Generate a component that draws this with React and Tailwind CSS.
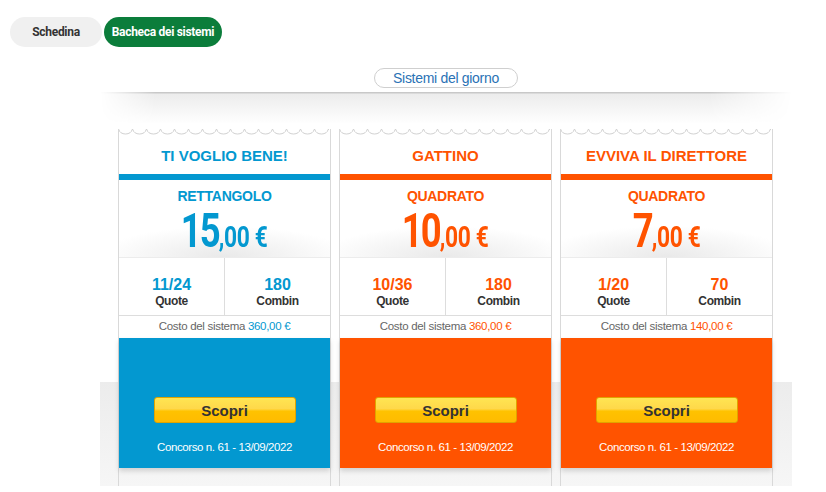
import React from "react";

const cards = [
  {
    title: "TI VOGLIO BENE!",
    kind: "RETTANGOLO",
    euro: "15",
    quote: "11/24",
    combin: "180",
    costo: "360,00 €",
    color: "blue",
  },
  {
    title: "GATTINO",
    kind: "QUADRATO",
    euro: "10",
    quote: "10/36",
    combin: "180",
    costo: "360,00 €",
    color: "orange",
  },
  {
    title: "EVVIVA IL DIRETTORE",
    kind: "QUADRATO",
    euro: "7",
    quote: "1/20",
    combin: "70",
    costo: "140,00 €",
    color: "orange",
  },
];

// ticket edge on top of every card
function Scallops() {
  let d = "M0,0.5 L1,0.5";
  for (let i = 0; i < 15; i++) d += " a6.5,4.5 0 0 0 13,0 l1,0";
  return (
    <svg width="213" height="6" viewBox="0 0 213 6" className="block">
      <path d={d} fill="none" stroke="#d2d2d2" strokeWidth="1" />
    </svg>
  );
}

function Card({ card }) {
  const isBlue = card.color === "blue";
  const text = isBlue ? "text-[#0398d0]" : "text-[#ff5300]";
  const bg = isBlue ? "bg-[#0398d0]" : "bg-[#ff5300]";

  return (
    <div className="w-[213px] flex flex-col">
      <Scallops />
      <div className="border-x border-[#d9d9d9] flex flex-col flex-1 -mt-[6px] pt-[6px]">
        <div className={`h-[39px] flex items-center justify-center pt-[3px] text-[15px] font-bold ${text}`}>
          {card.title}
        </div>
        <div className={`h-[6px] ${bg}`} />
        <div className="h-[77px] flex flex-col items-center bg-[radial-gradient(ellipse_60%_40%_at_50%_100%,#e9e9e9,#ffffff)]">
          <div className={`mt-[8px] text-[14px] font-bold leading-[16px] tracking-[-0.3px] ${text}`}>{card.kind}</div>
          <div className={`mt-[3px] flex items-baseline font-['Roboto',sans-serif] font-bold leading-none scale-x-[0.76] ${text}`}>
            <span className="text-[48px] tracking-[-2.5px]">{card.euro}</span>
            <span className="text-[30px] tracking-[-0.5px]">,00 €</span>
          </div>
        </div>
        <div className="h-[59px] bg-white flex border-t border-[#ececec] border-b border-b-[#dddddd]">
          <div className="flex-1 flex flex-col items-center border-r border-[#dddddd] pt-[18px]">
            <span className={`text-[16px] font-bold leading-[18px] ${text}`}>{card.quote}</span>
            <span className="text-[12px] font-bold text-[#333] leading-[14px] tracking-[-0.4px]">Quote</span>
          </div>
          <div className="flex-1 flex flex-col items-center pt-[18px]">
            <span className={`text-[16px] font-bold leading-[18px] ${text}`}>{card.combin}</span>
            <span className="text-[12px] font-bold text-[#333] leading-[14px] tracking-[-0.4px]">Combin</span>
          </div>
        </div>
        <div className="h-[22px] bg-white flex items-center justify-center text-[11.5px] text-[#666] tracking-[-0.3px]">
          Costo del sistema&nbsp;<span className={text}>{card.costo}</span>
        </div>
        <div className={`h-[130px] ${bg} flex flex-col items-center shadow-[0_3px_5px_rgba(0,0,0,0.15)]`}>
          <button className="mt-[59px] w-[142px] h-[26px] rounded-[3px] border border-[#e0a400] bg-[linear-gradient(to_bottom,#ffe552_0%,#ffd84a_45%,#ffc200_55%,#ffbb00_100%)] text-[15px] font-bold text-[#333] leading-none">
            Scopri
          </button>
          <div className="mt-[16px] text-[11.5px] text-white tracking-[-0.4px]">Concorso n. 61 - 13/09/2022</div>
        </div>
        <div className="flex-1" />
      </div>
    </div>
  );
}

export default function App() {
  return (
    <div className="w-[826px] h-[492px] overflow-hidden bg-white font-['Liberation_Sans',Arial,sans-serif]">
      <div className="flex gap-[2px] pl-[10px] pt-[17px] font-['Roboto',sans-serif]">
        <button className="h-[30px] w-[92px] rounded-full bg-[#f0f0f0] text-[12px] font-bold text-[#333] tracking-[-0.3px]">
          Schedina
        </button>
        <button className="h-[30px] w-[118px] rounded-full bg-[#0b7d3b] text-[12px] font-bold text-white tracking-[-0.3px]">
          Bacheca dei sistemi
        </button>
      </div>

      <div className="ml-[100px] w-[692px] flex flex-col">
        <div className="flex justify-center mt-[21px]">
          <div className="h-[20px] w-[144px] rounded-full border border-[#cfcfcf] flex items-center justify-center text-[14px] text-[#2a72b5] tracking-[-0.3px]">
            Sistemi del giorno
          </div>
        </div>
        <div className="mt-[4px] h-[32px] bg-[linear-gradient(to_bottom,#c8c8c8_0,#c8c8c8_1px,#ececec_2px,#ffffff_100%)] [mask-image:linear-gradient(to_right,transparent,black_8%,black_88%,transparent)]" />
        <div className="h-[362px] flex gap-[8px] px-[18px] pt-[5px] bg-[linear-gradient(to_bottom,#ffffff_258px,#ececec_258px,#f6f6f6_100%)]">
          {cards.map((c, i) => (
            <Card key={i} card={c} />
          ))}
        </div>
      </div>
    </div>
  );
}
